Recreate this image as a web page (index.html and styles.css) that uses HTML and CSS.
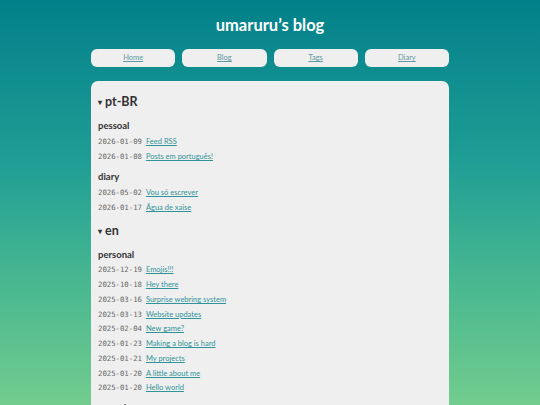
FILE: index.html
```html
<!DOCTYPE html>
<html lang="en">
<head>
<meta charset="utf-8">
<title>umaruru's blog</title>
<link rel="stylesheet" href="styles.css">
</head>
<body>
<div class="page">
  <header class="header">
    <h1 class="title">umaruru’s blog</h1>
    <nav class="nav">
      <a class="nav-btn" href="#">Home</a>
      <a class="nav-btn" href="#">Blog</a>
      <a class="nav-btn" href="#">Tags</a>
      <a class="nav-btn" href="#">Diary</a>
    </nav>
  </header>
  <main class="card">
    <section class="lang">
      <h2 class="lang-title"><span class="caret">▾</span>pt-BR</h2>
      <h3 class="cat">pessoal</h3>
      <ul class="posts">
        <li><span class="date">2026-01-09</span><a href="#">Feed RSS</a></li>
        <li><span class="date">2026-01-08</span><a href="#">Posts em português!</a></li>
      </ul>
      <h3 class="cat">diary</h3>
      <ul class="posts">
        <li><span class="date">2026-05-02</span><a href="#">Vou só escrever</a></li>
        <li><span class="date">2026-01-17</span><a href="#">Água de xaise</a></li>
      </ul>
    </section>
    <section class="lang">
      <h2 class="lang-title"><span class="caret">▾</span>en</h2>
      <h3 class="cat">personal</h3>
      <ul class="posts posts-en">
        <li><span class="date">2025-12-19</span><a href="#">Emojis!!!</a></li>
        <li><span class="date">2025-10-18</span><a href="#">Hey there</a></li>
        <li><span class="date">2025-03-16</span><a href="#">Surprise webring system</a></li>
        <li><span class="date">2025-03-13</span><a href="#">Website updates</a></li>
        <li><span class="date">2025-02-04</span><a href="#">New game?</a></li>
        <li><span class="date">2025-01-23</span><a href="#">Making a blog is hard</a></li>
        <li><span class="date">2025-01-21</span><a href="#">My projects</a></li>
        <li><span class="date">2025-01-20</span><a href="#">A little about me</a></li>
        <li><span class="date">2025-01-20</span><a href="#">Hello world</a></li>
      </ul>
      <h3 class="cat cat-last">gamedev</h3>
    </section>
  </main>
</div>
</body>
</html>
```
FILE: styles.css
```css
html, body {
  margin: 0;
  padding: 0;
  height: 100%;
  overflow: hidden;
}
body {
  background: linear-gradient(to bottom, #02808a 0%, #1f9e95 40%, #49b890 70%, #72cc8e 100%);
  font-family: Lato, "Open Sans", sans-serif;
}
.page {
  width: 358px;
  margin: 0 auto;
}
.header {
  padding-top: 15px;
}
.title {
  margin: 0;
  text-align: center;
  color: #ffffff;
  font-size: 16.5px;
  line-height: 20px;
  font-weight: 700;
}
.nav {
  margin-top: 14px;
  display: grid;
  grid-template-columns: repeat(4, 1fr);
  column-gap: 7px;
}
.nav-btn {
  display: block;
  height: 18px;
  line-height: 18px;
  background: #efefef;
  border-radius: 6px;
  text-align: center;
  font-size: 7.5px;
  color: #5e9aa2;
}
.card {
  margin-top: 14px;
  background: #efefef;
  border-radius: 7px;
  padding: 13px 7px 20px;
  min-height: 400px;
}
.lang-title {
  margin: 0;
  font-size: 12.5px;
  line-height: 16px;
  font-weight: 700;
  color: #333333;
}
.caret {
  font-size: 8px;
  margin-right: 3px;
  vertical-align: 1px;
}
.lang + .lang {
  margin-top: 7px;
}
.cat {
  margin: 9px 0 0;
  font-size: 9.5px;
  line-height: 14px;
  font-weight: 700;
  color: #333333;
}
.posts + .cat {
  margin-top: 5px;
}
.cat-last {
  margin-top: 10px;
}
.posts {
  list-style: none;
  margin: 0;
  padding: 1px 0 0;
}
.posts li {
  display: flex;
  align-items: center;
  height: 15.5px;
  white-space: nowrap;
}
.posts-en li {
  height: 14.75px;
}
.date {
  font-family: "DejaVu Sans Mono", monospace;
  font-size: 7.3px;
  line-height: 10px;
  color: #666666;
  margin-right: 4px;
}
.posts a {
  font-size: 7.5px;
  line-height: 10px;
  color: #2f939a;
}
```
